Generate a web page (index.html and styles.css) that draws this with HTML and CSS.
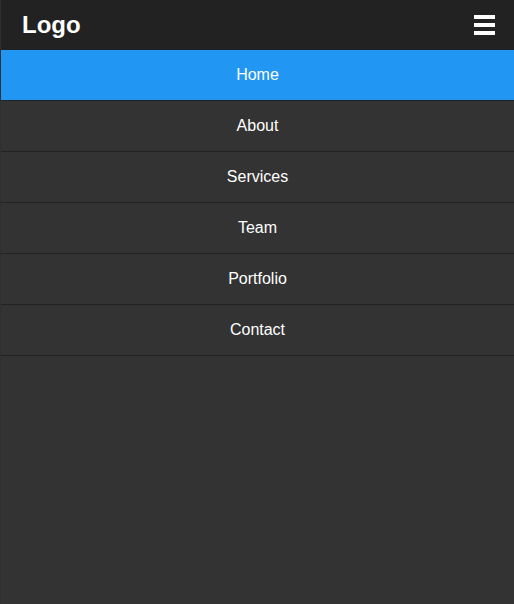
FILE: index.html
```html
<!DOCTYPE html>
<html>
<head>
<meta charset="utf-8">
<link rel="stylesheet" href="styles.css">
</head>
<body>
<header class="topbar">
  <div class="logo">Logo</div>
  <div class="burger" aria-label="menu"><span></span><span></span><span></span></div>
</header>
<nav class="menu">
  <a class="item active" href="#">Home</a>
  <a class="item" href="#">About</a>
  <a class="item" href="#">Services</a>
  <a class="item" href="#">Team</a>
  <a class="item" href="#">Portfolio</a>
  <a class="item" href="#">Contact</a>
</nav>
</body>
</html>
```
FILE: styles.css
```css
html, body {
  margin: 0;
  padding: 0;
  height: 100%;
}
body {
  background: #333333;
  font-family: "Liberation Sans", Arial, sans-serif;
  color: #fff;
  border-left: 1px solid #2b3038;
  box-sizing: border-box;
}
.topbar {
  height: 50px;
  background: #222222;
  display: flex;
  align-items: center;
  justify-content: space-between;
  padding: 0 19px 0 21px;
}
.logo {
  font-size: 24px;
  font-weight: bold;
}
.burger {
  display: flex;
  flex-direction: column;
  gap: 4px;
}
.burger span {
  display: block;
  width: 21px;
  height: 4px;
  background: #fff;
}
.menu {
  display: flex;
  flex-direction: column;
}
.item {
  display: block;
  height: 50px;
  line-height: 50px;
  text-align: center;
  color: #fff;
  text-decoration: none;
  font-size: 16px;
  border-bottom: 1px solid #222222;
}
.item.active {
  background: #2196f3;
}
```
